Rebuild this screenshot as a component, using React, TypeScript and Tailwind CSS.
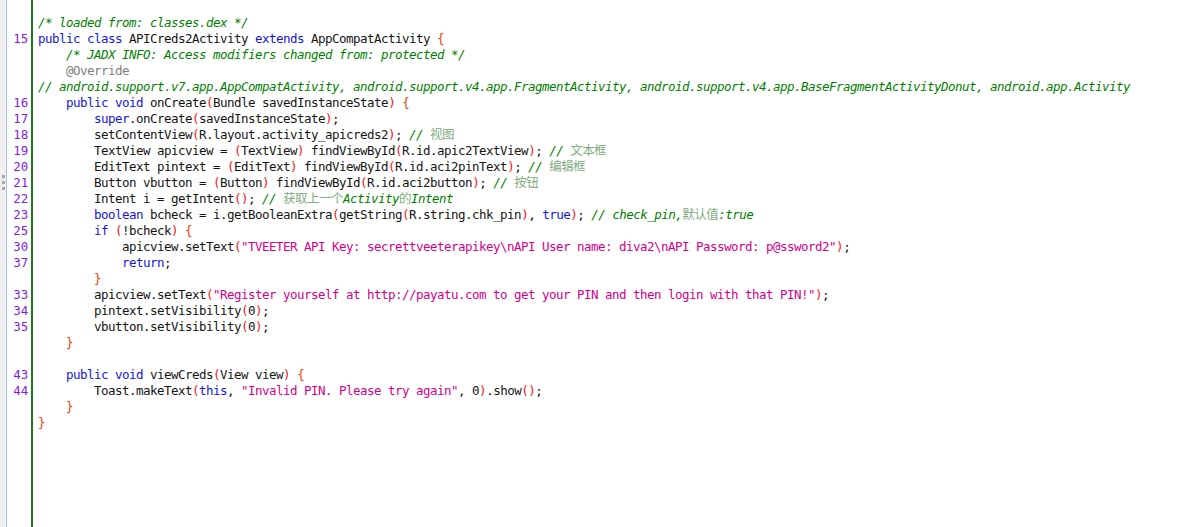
import React from 'react';

type Row = { n: string; code: string };

const rows: Row[] = [
  { n: '', code: '/* loaded from: classes.dex */' },
  { n: '15', code: 'public class APICreds2Activity extends AppCompatActivity {' },
  { n: '', code: '    /* JADX INFO: Access modifiers changed from: protected */' },
  { n: '', code: '    @Override' },
  {
    n: '',
    code:
      '// android.support.v7.app.AppCompatActivity, android.support.v4.app.FragmentActivity, android.support.v4.app.BaseFragmentActivityDonut, android.app.Activity',
  },
  { n: '16', code: '    public void onCreate(Bundle savedInstanceState) {' },
  { n: '17', code: '        super.onCreate(savedInstanceState);' },
  { n: '18', code: '        setContentView(R.layout.activity_apicreds2); // 视图' },
  { n: '19', code: '        TextView apicview = (TextView) findViewById(R.id.apic2TextView); // 文本框' },
  { n: '20', code: '        EditText pintext = (EditText) findViewById(R.id.aci2pinText); // 编辑框' },
  { n: '21', code: '        Button vbutton = (Button) findViewById(R.id.aci2button); // 按钮' },
  { n: '22', code: '        Intent i = getIntent(); // 获取上一个Activity的Intent' },
  {
    n: '23',
    code: '        boolean bcheck = i.getBooleanExtra(getString(R.string.chk_pin), true); // check_pin,默认值:true',
  },
  { n: '25', code: '        if (!bcheck) {' },
  {
    n: '30',
    code: '            apicview.setText("TVEETER API Key: secrettveeterapikey\\nAPI User name: diva2\\nAPI Password: p@ssword2");',
  },
  { n: '37', code: '            return;' },
  { n: '', code: '        }' },
  {
    n: '33',
    code: '        apicview.setText("Register yourself at http://payatu.com to get your PIN and then login with that PIN!");',
  },
  { n: '34', code: '        pintext.setVisibility(0);' },
  { n: '35', code: '        vbutton.setVisibility(0);' },
  { n: '', code: '    }' },
  { n: '', code: '' },
  { n: '43', code: '    public void viewCreds(View view) {' },
  { n: '44', code: '        Toast.makeText(this, "Invalid PIN. Please try again", 0).show();' },
  { n: '', code: '    }' },
  { n: '', code: '}' },
];

const keywords = new Set(['public', 'class', 'extends', 'void', 'super', 'boolean', 'true', 'if', 'return', 'this']);

// comment text: CJK glyphs render a lighter green
function Comment({ text }: { text: string }) {
  const parts = text.split(/([\u4e00-\u9fff]+)/);
  return (
    <span className="italic text-[#008000]">
      {parts.map((p, i) =>
        /[\u4e00-\u9fff]/.test(p) ? (
          <span key={i} className="text-[#82ad82] not-italic">
            {p}
          </span>
        ) : (
          <span key={i}>{p}</span>
        )
      )}
    </span>
  );
}

function CodeLine({ code }: { code: string }) {
  const out: React.ReactNode[] = [];
  let i = 0;
  let buf = '';
  const flush = () => {
    if (buf) out.push(<span key={out.length}>{buf}</span>);
    buf = '';
  };
  while (i < code.length) {
    const rest = code.slice(i);
    if (rest.startsWith('//') || rest.startsWith('/*')) {
      flush();
      out.push(<Comment key={out.length} text={rest} />);
      break;
    }
    if (rest.startsWith('@Override')) {
      flush();
      out.push(
        <span key={out.length} className="text-[#808080]">
          @Override
        </span>
      );
      i += 9;
      continue;
    }
    const ch = code[i];
    if (ch === '"') {
      flush();
      const end = code.indexOf('"', i + 1);
      out.push(
        <span key={out.length} className="text-[#d2008c]">
          {code.slice(i, end + 1)}
        </span>
      );
      i = end + 1;
      continue;
    }
    if (ch === '(' || ch === ')') {
      flush();
      out.push(
        <span key={out.length} className="text-[#f0141e]">
          {ch}
        </span>
      );
      i++;
      continue;
    }
    if (ch === '{' || ch === '}') {
      flush();
      out.push(
        <span key={out.length} className="text-[#f43c0a]">
          {ch}
        </span>
      );
      i++;
      continue;
    }
    const word = /^[A-Za-z_][A-Za-z0-9_]*/.exec(rest);
    if (word) {
      if (keywords.has(word[0])) {
        flush();
        out.push(
          <span key={out.length} className="text-[#1414dc]">
            {word[0]}
          </span>
        );
      } else {
        buf += word[0];
      }
      i += word[0].length;
      continue;
    }
    buf += ch;
    i++;
  }
  flush();
  return <>{out}</>;
}

export default function App() {
  return (
    <div
      className="flex h-[527px] w-full overflow-hidden bg-white text-[12.5px] leading-[16px] tracking-[-0.525px] text-[#141414]"
      style={{ fontFamily: '"DejaVu Sans Mono", "Noto Sans CJK SC", monospace' }}
    >
      {/* Left strip with drag dots */}
      <div className="flex w-[6px] shrink-0 flex-col items-center justify-center gap-[3px] bg-[#f0f0f0] pb-[162px]">
        <div className="h-[3px] w-[3px] bg-[#a8a8a8]" />
        <div className="h-[3px] w-[3px] bg-[#a8a8a8]" />
        <div className="h-[3px] w-[3px] bg-[#a8a8a8]" />
      </div>
      <div className="w-px shrink-0 bg-[#a9c4e4]" />

      {/* Line numbers */}
      <div className="w-[24px] shrink-0 pr-[3px] pt-[15px] text-right text-[#7d1ee0] tracking-[-0.2px]">
        {rows.map((r, i) => (
          <div key={i} className="h-[16px] whitespace-pre">
            {r.n}
          </div>
        ))}
      </div>
      <div className="w-[2px] shrink-0 bg-[#1c7a1c]" />

      {/* Code */}
      <div className="flex-1 pl-[5px] pt-[15px]">
        {rows.map((r, i) => (
          <div key={i} className="h-[16px] whitespace-pre">
            <CodeLine code={r.code} />
          </div>
        ))}
      </div>
    </div>
  );
}
